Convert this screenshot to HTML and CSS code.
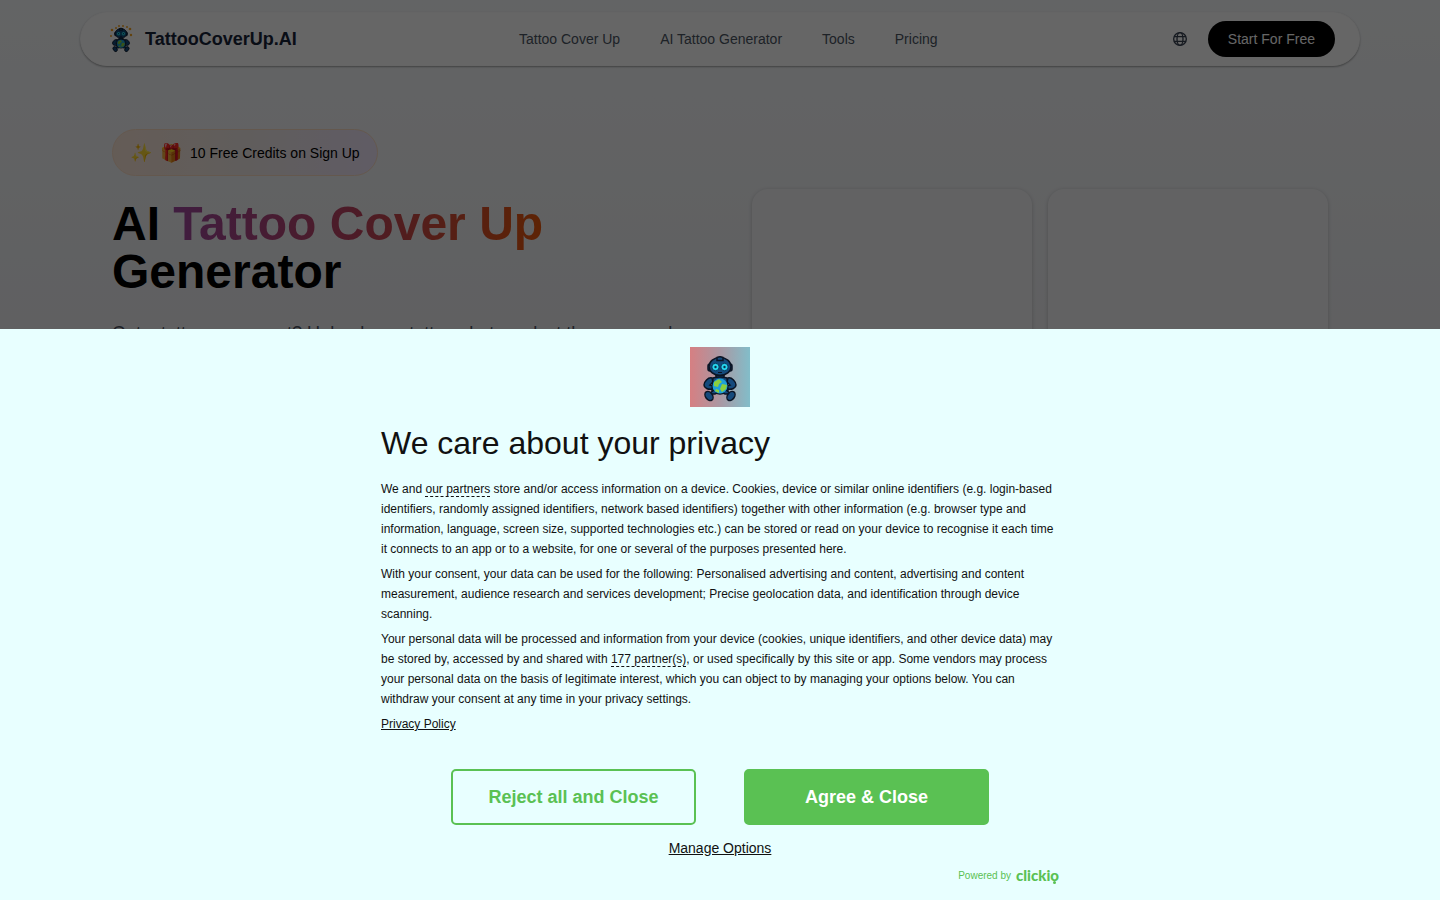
FILE: index.html
```html
<!DOCTYPE html>
<html lang="en">

<head>
  <meta charset="UTF-8">
  <meta name="viewport" content="width=device-width, initial-scale=1.0">
  <title>AI Tattoo Cover Up Generator</title>
  <link rel="stylesheet" href="styles.css">
</head>

<body>
  <!-- Robot used in the header and in the consent dialog -->
  <svg class="sprite" aria-hidden="true">
    <symbol id="robot" viewBox="0 0 60 60">
      <g fill="#154a7c" stroke="#0a1424" stroke-width="1.500">
        <rect x="18" y="17" width="4" height="7" rx="2" />
        <rect x="38" y="17" width="4" height="7" rx="2" />
        <ellipse cx="30" cy="19.500" rx="11" ry="9" />
        <path d="M27 10.500q3-1.500 6 0v3h-6z" />
        <path d="M26 28.500h8v3h-8z" />
        <path d="M22 31c-4-1-8 4-8 7s4 5 9 4l1-3-4-1 3-3z" />
        <path d="M38 31c4-1 8 4 8 7s-4 5-9 4l-1-3 4-1-3-3z" />
        <path d="M23 31q7-2 14 0l1 13q-8 6-16 0z" />
        <path d="M24 43l-5 4h6l3-2z" />
        <path d="M36 43l5 4h-6l-3-2z" />
        <ellipse cx="19" cy="49" rx="3.500" ry="5" transform="rotate(-35 19 49)" />
        <ellipse cx="41" cy="49" rx="3.500" ry="5" transform="rotate(35 41 49)" />
      </g>
      <g fill="#27d7ef" stroke="#073459" stroke-width="1">
        <circle cx="25.500" cy="20" r="3.700" />
        <circle cx="34.500" cy="20" r="3.700" />
      </g>
      <circle cx="25.500" cy="20" r="1.200" fill="#06344f" />
      <circle cx="34.500" cy="20" r="1.200" fill="#06344f" />
      <path d="M28 25.500h4" stroke="#0a1424" />
      <circle cx="30" cy="39" r="7.500" fill="#1fa0d8" />
      <path d="M24 35l5-3 3 3-3 2-1 3-4-1zM32 37l5 1-1 4-4 3-2-3zM26 42l3 1v3l-4-2z" fill="#8bcf3f" />
    </symbol>
  </svg>

  <header class="header">
    <a class="logo" href="#">
      <svg class="logo-icon" viewBox="0 0 32 32" aria-hidden="true">
        <g fill="#f5a623">
          <circle cx="7" cy="7" r="1.300" /><circle cx="11" cy="5" r="1" />
          <circle cx="6" cy="13" r="1" /><circle cx="14" cy="3" r="1" />
          <circle cx="18" cy="3" r="1" /><circle cx="22" cy="4" r="1" />
          <circle cx="25" cy="6" r="1.300" /><circle cx="26" cy="12" r="1.200" />
        </g>
        <use href="#robot" x="-1" y="0" width="34" height="32" />
      </svg>
      <span>TattooCoverUp.AI</span>
    </a>
    <nav class="nav-menu">
      <a href="#">Tattoo Cover Up</a>
      <a href="#">AI Tattoo Generator</a>
      <a href="#">Tools</a>
      <a href="#">Pricing</a>
    </nav>
    <div class="header-actions">
      <button class="lang-btn" type="button" aria-label="Language">
        <svg viewBox="0 0 24 24" fill="none" stroke="currentColor" stroke-width="2">
          <circle cx="12" cy="12" r="9.500" />
          <ellipse cx="12" cy="12" rx="4.500" ry="9.500" />
          <path d="M3 8.500h18M3 15.500h18" />
        </svg>
      </button>
      <button class="start-btn" type="button">Start For Free</button>
    </div>
  </header>

  <main class="hero">
    <div class="hero-text">
      <div class="badge">
        <span class="badge-emoji">✨</span>
        <span class="badge-emoji">🎁</span>
        <span>10 Free Credits on Sign Up</span>
      </div>
      <h1 class="hero-title">AI <span class="gradient-text">Tattoo Cover Up</span> Generator</h1>
      <p class="hero-desc">Got a tattoo you regret? Upload your tattoo photo, select the area, and</p>
    </div>
    <div class="hero-cards">
      <div class="card"></div>
      <div class="card"></div>
    </div>
  </main>

  <!-- Consent dialog -->
  <div class="backdrop"></div>
  <section class="consent" role="dialog" aria-labelledby="consent-title">
    <div class="consent-inner">
      <svg class="consent-logo" viewBox="0 0 60 60" aria-hidden="true">
        <defs>
          <linearGradient id="logo-bg">
            <stop offset="0" stop-color="#d67f82" />
            <stop offset="0.500" stop-color="#aa98a3" />
            <stop offset="1" stop-color="#82bdc9" />
          </linearGradient>
        </defs>
        <rect width="60" height="60" fill="url(#logo-bg)" />
        <use href="#robot" width="60" height="60" />
      </svg>
      <h2 class="consent-title" id="consent-title">We care about your privacy</h2>
      <div class="consent-text">
        <p>We and <a class="partners" href="#">our partners</a> store and/or access information on a device. Cookies, device or similar online identifiers (e.g. login-based identifiers, randomly assigned identifiers, network based identifiers) together with other information (e.g. browser type and information, language, screen size, supported technologies etc.) can be stored or read on your device to recognise it each time it connects to an app or to a website, for one or several of the purposes presented here.</p>
        <p>With your consent, your data can be used for the following: Personalised advertising and content, advertising and content measurement, audience research and services development; Precise geolocation data, and identification through device scanning.</p>
        <p>Your personal data will be processed and information from your device (cookies, unique identifiers, and other device data) may be stored by, accessed by and shared with <a class="partners" href="#">177 partner(s)</a>, or used specifically by this site or app. Some vendors may process your personal data on the basis of legitimate interest, which you can object to by managing your options below. You can withdraw your consent at any time in your privacy settings.</p>
        <p><a href="#">Privacy Policy</a></p>
      </div>
      <div class="consent-buttons">
        <button class="btn btn-outline" type="button">Reject all and Close</button>
        <button class="btn btn-solid" type="button">Agree &amp; Close</button>
      </div>
      <button class="manage-btn" type="button">Manage Options</button>
      <a class="powered" href="#">Powered by <span class="clickio">clickio</span></a>
    </div>
  </section>
</body>

</html>
```
FILE: styles.css
```css
* {
  margin: 0;
  padding: 0;
  box-sizing: border-box;
}

body {
  min-height: 100vh;
  padding-top: 12px;
  font-family: "Liberation Sans", Arial, sans-serif;
  background: linear-gradient(#f8fafc, #eff0f3 320px, #eeeff2);
  overflow: hidden;
}

a {
  color: inherit;
}

button {
  font-family: inherit;
  cursor: pointer;
}

.sprite {
  position: absolute;
  width: 0;
  height: 0;
}

/* Header */
.header {
  display: flex;
  justify-content: space-between;
  align-items: center;
  max-width: 1280px;
  margin: 0 auto;
  padding: 8px 24px;
  border: 1px solid #fdfdfd;
  border-radius: 32px;
  background: #fff;
  box-shadow: 0 1px 2px rgba(0, 0, 0, 0.35);
}

.header a {
  text-decoration: none;
}

.logo {
  display: flex;
  align-items: center;
  gap: 8px;
  font-size: 18px;
  font-weight: bold;
  color: #172339;
}

.logo-icon {
  width: 32px;
  height: 32px;
}

.nav-menu {
  display: flex;
  gap: 40px;
  font-size: 14px;
  color: #4b5563;
}

.header-actions {
  display: flex;
  align-items: center;
  gap: 8px;
}

.lang-btn {
  display: flex;
  align-items: center;
  justify-content: center;
  width: 40px;
  height: 36px;
  border: none;
  background: none;
  color: #374151;
}

.lang-btn svg {
  width: 16px;
  height: 16px;
}

.start-btn {
  height: 36px;
  padding: 0 20px;
  border: none;
  border-radius: 18px;
  background: #000;
  color: #fff;
  font-size: 14px;
}

/* Hero */
.hero {
  display: grid;
  grid-template-columns: 1fr 1fr;
  gap: 64px;
  max-width: 1280px;
  margin: 0 auto;
  padding: 63px 32px 0;
}

.badge {
  display: inline-flex;
  align-items: center;
  gap: 8px;
  height: 47px;
  margin-bottom: 24px;
  padding: 0 17px;
  border: 1px solid #fbdcc4;
  border-radius: 24px;
  background: linear-gradient(90deg, #fbe6d8, #f0e9e6 50%, #efe6fb);
  font-size: 14px;
  color: #000;
}

.badge-emoji {
  font-size: 18px;
}

.hero-title {
  font-size: 48px;
  line-height: 48px;
  color: #000;
}

.gradient-text {
  background: linear-gradient(90deg, #a04aa0, #c04560 50%, #ea580c);
  -webkit-background-clip: text;
  background-clip: text;
  color: transparent;
}

.hero-desc {
  margin-top: 23px;
  font-size: 18px;
  line-height: 28px;
  color: #4b5563;
}

.hero-cards {
  display: grid;
  grid-template-columns: 1fr 1fr;
  gap: 16px;
  padding-top: 60px;
}

.card {
  aspect-ratio: 1;
  border-radius: 16px;
  background: #f5f6f8;
  box-shadow: 0 1px 4px rgba(0, 0, 0, 0.2);
}

/* Consent dialog */
.backdrop {
  position: fixed;
  inset: 0;
  background: rgba(0, 0, 0, 0.6);
}

.consent {
  position: fixed;
  left: 0;
  right: 0;
  bottom: 0;
  padding: 18px 20px 16px;
  background: #e8ffff;
  color: #111;
}

.consent-inner {
  display: flex;
  flex-direction: column;
  align-items: center;
  max-width: 678px;
  margin: 0 auto;
}

.consent-logo {
  width: 60px;
  height: 60px;
}

.consent-title {
  align-self: flex-start;
  margin: 16px 0;
  font-size: 32px;
  font-weight: normal;
  line-height: 40px;
}

.consent-text {
  display: flex;
  flex-direction: column;
  gap: 5px;
  font-size: 12px;
  line-height: 20px;
}

.partners {
  text-decoration: none;
  border-bottom: 1px dashed #111;
}

.consent-buttons {
  display: flex;
  gap: 48px;
  margin-top: 35px;
}

.btn {
  width: 245px;
  height: 56px;
  border: 2px solid #5ac153;
  border-radius: 5px;
  font-size: 18px;
  font-weight: bold;
}

.btn-outline {
  background: none;
  color: #5ac153;
}

.btn-solid {
  background: #5ac153;
  color: #fff;
}

.manage-btn {
  margin-top: 13px;
  border: none;
  background: none;
  color: #111;
  font-size: 14px;
  line-height: 20px;
  text-decoration: underline;
}

.powered {
  display: flex;
  align-items: center;
  align-self: flex-end;
  gap: 5px;
  height: 18px;
  margin-top: 8px;
  color: #5ac153;
  font-size: 10px;
  text-decoration: none;
}

.clickio {
  position: relative;
  font-family: Lato, sans-serif;
  font-size: 15px;
  font-weight: 900;
  line-height: 16px;
}

/* dot under the last letter of the wordmark */
.clickio::after {
  content: "";
  position: absolute;
  right: 3px;
  bottom: -1px;
  width: 3px;
  height: 3px;
  border-radius: 50%;
  background: #5ac153;
}
```
